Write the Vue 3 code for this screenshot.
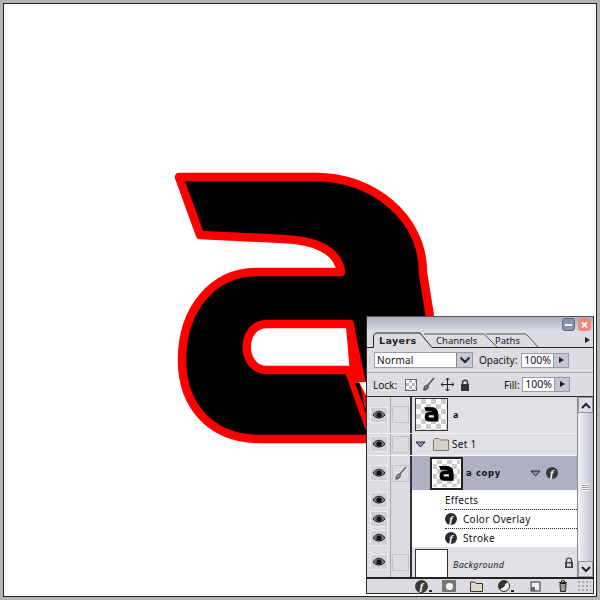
<script setup>
// glyph outline, also reused for the layer thumbnails
const outerPath =
  "M179 177 L317 177 C370 177 423 215 423 273 L431 323 L431 439 L260 439 C210 439 182 405 182 360 C182 310 212 272 257 272 L341 272 C338 250 315 240 283 239 L200 235 Z";
const counterPath = "M267 324 L350 324 L354 370 L267 370 C240 370 240 324 267 324 Z";

const effects = ["Color Overlay", "Stroke"];
</script>

<template>
  <div class="frame">
    <svg class="glyph" width="592" height="592" viewBox="4 4 592 592">
      <path :d="outerPath" fill="#000" stroke="#f00" stroke-width="8.5" stroke-linejoin="round" />
      <path :d="counterPath" fill="#fff" stroke="#f00" stroke-width="8.5" stroke-linejoin="round" />
      <path d="M351 326 L368 408" stroke="#f00" stroke-width="6" fill="none" />
      <path d="M348 372 L368 428" stroke="#f00" stroke-width="6" fill="none" />
      <path d="M350 368 L360 368 L366 383 L354 383 Z" fill="#f00" />
      <path d="M359 382 L366 382 L367 397 Z" fill="#fff" />
    </svg>

    <div class="panel">
      <div class="titlebar">
        <span class="winbtn min"><i></i></span>
        <span class="winbtn close">×</span>
      </div>

      <div class="tabs">
        <svg class="tab-lines" width="226" height="16" viewBox="367 332 226 16">
          <path d="M486 334 L526 334 L538 347" fill="none" stroke="#555" />
          <path d="M424 334 L484 334 L497 347" fill="none" stroke="#555" />
          <path d="M367 347.5 L373.5 347.5 L373.5 335 L376 333 L420 333 L432 347.5 L593 347.5" fill="none" stroke="#222" />
        </svg>
        <span class="tab active">Layers</span>
        <span class="tab ch">Channels</span>
        <span class="tab pa">Paths</span>
        <span class="menu-btn"></span>
      </div>

      <div class="controls top">
        <div class="select">
          <span>Normal</span>
          <span class="select-btn">
            <svg width="12" height="8" viewBox="0 0 12 8"><path d="M1.5 1.5 L6 6 L10.5 1.5" fill="none" stroke="#223" stroke-width="2" /></svg>
          </span>
        </div>
        <span class="lbl opacity">Opacity:</span>
        <span class="num">100%</span>
        <span class="step"></span>
      </div>

      <div class="controls lockrow">
        <span class="lbl lock-lbl">Lock:</span>
        <span class="lock-box"></span>
        <svg class="l-ic" width="14" height="15" viewBox="0 0 14 15"><path d="M12 1 L6 8 M2 13 C2 10 4 8 6 8 C7 10 5 13 2 13 Z" stroke="#555" stroke-width="1.6" fill="#888" /></svg>
        <svg class="l-ic mv" width="13" height="13" viewBox="0 0 13 13"><path d="M6.5 0 V13 M0 6.5 H13 M4.5 2 L6.5 0 L8.5 2 M4.5 11 L6.5 13 L8.5 11 M2 4.5 L0 6.5 L2 8.5 M11 4.5 L13 6.5 L11 8.5" stroke="#222" fill="none" /></svg>
        <svg class="l-ic pad" width="10" height="12" viewBox="0 0 10 12"><path d="M2.5 5 V3.5 C2.5 0.5 7.5 0.5 7.5 3.5 V5" fill="none" stroke="#333" stroke-width="1.4" /><rect x="1" y="5" width="8" height="7" fill="#333" /></svg>
        <span class="lbl fill">Fill:</span>
        <span class="num">100%</span>
        <span class="step"></span>
      </div>

      <div class="body">
        <div class="list">
          <div class="row h-a">
            <div class="eye"><svg width="14" height="10" viewBox="0 0 14 10"><path d="M1 5 C4 0 10 0 13 5 C10 9 4 9 1 5 Z" fill="#777" stroke="#222" /><circle cx="7" cy="5" r="2.6" fill="#111" /></svg></div>
            <div class="link"><span class="slot"></span></div>
            <div class="cell">
              <div class="thumb">
                <svg width="31" height="31" viewBox="-5 0 620 620"><path :d="outerPath" fill="#000" stroke="#000" stroke-width="24" /><path :d="counterPath" fill="#eee" /></svg>
              </div>
              <span class="name small">a</span>
            </div>
          </div>

          <div class="row h-set">
            <div class="eye"><svg width="14" height="10" viewBox="0 0 14 10"><path d="M1 5 C4 0 10 0 13 5 C10 9 4 9 1 5 Z" fill="#777" stroke="#222" /><circle cx="7" cy="5" r="2.6" fill="#111" /></svg></div>
            <div class="link"><span class="slot"></span></div>
            <div class="cell set">
              <svg class="tri" width="11" height="7" viewBox="0 0 11 7"><path d="M1 1 H10 L5.5 6 Z" fill="#8f8fc4" stroke="#223" /></svg>
              <svg class="folder" width="16" height="13" viewBox="0 0 16 13"><path d="M0.5 12.5 V2 L2 0.5 H6 L7.5 2 H15.5 V12.5 Z" fill="#d4d2c6" stroke="#777" /></svg>
              <span class="name">Set 1</span>
            </div>
          </div>

          <div class="row h-copy">
            <div class="eye"><svg width="14" height="10" viewBox="0 0 14 10"><path d="M1 5 C4 0 10 0 13 5 C10 9 4 9 1 5 Z" fill="#777" stroke="#222" /><circle cx="7" cy="5" r="2.6" fill="#111" /></svg></div>
            <div class="link"><span class="slot brush"><svg width="14" height="14" viewBox="0 0 14 14"><path d="M12 1 L6 8 M2 13 C2 10 4 8 6 8 C7 10 5 13 2 13 Z" stroke="#666" stroke-width="1.5" fill="#999" /></svg></span></div>
            <div class="cell selected">
              <div class="thumb picked">
                <svg width="27" height="27" viewBox="45 50 520 520"><path :d="outerPath" fill="#000" stroke="#000" stroke-width="24" /><path :d="counterPath" fill="#eee" /></svg>
              </div>
              <span class="name bold">a copy</span>
              <svg class="tri-r" width="11" height="7" viewBox="0 0 11 7"><path d="M1 1 H10 L5.5 6 Z" fill="#8f8fc4" stroke="#223" /></svg>
              <span class="fx dark">f</span>
            </div>
          </div>

          <div class="row h-fx">
            <div class="eye"><svg width="14" height="10" viewBox="0 0 14 10"><path d="M1 5 C4 0 10 0 13 5 C10 9 4 9 1 5 Z" fill="#777" stroke="#222" /><circle cx="7" cy="5" r="2.6" fill="#111" /></svg></div>
            <div class="link"></div>
            <div class="cell white"><span class="name fx-title">Effects</span></div>
          </div>
          <div v-for="item in effects" :key="item" class="row h-fx">
            <div class="eye"><svg width="14" height="10" viewBox="0 0 14 10"><path d="M1 5 C4 0 10 0 13 5 C10 9 4 9 1 5 Z" fill="#777" stroke="#222" /><circle cx="7" cy="5" r="2.6" fill="#111" /></svg></div>
            <div class="link"></div>
            <div class="cell white">
              <div class="fx-line">
                <span class="fx">f</span>
                <span class="name">{{ item }}</span>
              </div>
            </div>
          </div>

          <div class="row h-bg">
            <div class="eye"><svg width="14" height="10" viewBox="0 0 14 10"><path d="M1 5 C4 0 10 0 13 5 C10 9 4 9 1 5 Z" fill="#777" stroke="#222" /><circle cx="7" cy="5" r="2.6" fill="#111" /></svg></div>
            <div class="link"><span class="slot"></span></div>
            <div class="cell bg">
              <div class="thumb blank"></div>
              <span class="name ital">Background</span>
              <svg class="bg-lock" width="10" height="11" viewBox="0 0 10 11"><path d="M2.5 5 V3 C2.5 0.5 7.5 0.5 7.5 3 V5" fill="none" stroke="#444" stroke-width="1.4" /><rect x="1" y="5" width="8" height="6" fill="#444" /><rect x="3" y="6.5" width="4" height="3" fill="#ddd" /></svg>
            </div>
          </div>
        </div>

        <div class="scroll">
          <span class="arrow"><svg width="10" height="7" viewBox="0 0 10 7"><path d="M1 6 L5 2 L9 6" fill="none" stroke="#223" stroke-width="2" /></svg></span>
          <span class="thumb-bar"><i></i></span>
          <span class="arrow"><svg width="10" height="7" viewBox="0 0 10 7"><path d="M1 1 L5 5 L9 1" fill="none" stroke="#223" stroke-width="2" /></svg></span>
        </div>
      </div>

      <div class="footer">
        <span class="fx dark big">f</span><i class="dot"></i>
        <span class="mask"><i></i></span>
        <svg class="f-ic" width="13" height="11" viewBox="0 0 13 11"><path d="M0.5 10.5 V1 H4.5 L6 2.5 H12.5 V10.5 Z" fill="#dcd8c8" stroke="#333" /></svg>
        <span class="half"></span><i class="dot d2"></i>
        <svg class="f-new" width="11" height="11" viewBox="0 0 11 11"><rect x="1" y="1" width="9" height="9" fill="#eee" stroke="#333" /><rect x="1" y="6" width="4" height="4" fill="#666" /></svg>
        <svg class="f-bin" width="10" height="12" viewBox="0 0 10 12"><path d="M1 2.5 H9 M3.5 2 V0.7 H6.5 V2" stroke="#222" fill="none" /><path d="M2 3.5 H8 L7.5 11.5 H2.5 Z" fill="#999" stroke="#222" /></svg>
        <span class="grip"></span>
      </div>
    </div>
  </div>
</template>

<style scoped>
.frame {
  position: relative;
  width: 600px;
  height: 600px;
  box-sizing: border-box;
  background: #fff;
  border: 4px solid #b4b4b4;
  outline: 1px solid #222;
  outline-offset: -4px;
  overflow: hidden;
  font-family: "Noto Sans", "DejaVu Sans", sans-serif;
  font-size: 10px;
  color: #111;
}
.glyph {
  position: absolute;
  left: 0;
  top: 0;
}
.panel {
  position: absolute;
  left: 362px;
  top: 312px;
  width: 226px;
  height: 276px;
  display: flex;
  flex-direction: column;
  background: #dcdce2;
  border: 1px solid #2c2c2c;
  border-top-color: #555;
}
.titlebar {
  height: 15px;
  display: flex;
  justify-content: flex-end;
  align-items: center;
  gap: 3px;
  padding: 0 2px 0 0;
  background: linear-gradient(#a9adbe, #dfdfe6);
}
.winbtn {
  width: 13px;
  height: 13px;
  border-radius: 3px;
  box-sizing: border-box;
  display: flex;
  align-items: center;
  justify-content: center;
}
.min {
  background: #8c93ad;
  border: 1px solid #666c86;
}
.min i {
  width: 7px;
  height: 2px;
  background: #fff;
}
.close {
  background: #ee8a72;
  color: #fff;
  font-size: 14px;
  font-weight: bold;
  line-height: 1;
}
.tabs {
  position: relative;
  height: 16px;
  display: flex;
  align-items: center;
  font-size: 9.5px;
}
.tab-lines {
  position: absolute;
  left: 0;
  top: 0;
}
.tab {
  position: relative;
  color: #222;
}
.active {
  margin-left: 12px;
  width: 50px;
  font-family: "DejaVu Sans", sans-serif;
  font-weight: bold;
  font-size: 9.5px;
  letter-spacing: 0.4px;
}
.ch {
  margin-left: 7px;
  width: 59px;
}
.menu-btn {
  position: relative;
  margin-left: auto;
  margin-right: 3px;
  width: 0;
  height: 0;
  border-left: 5px solid #222;
  border-top: 3px solid transparent;
  border-bottom: 3px solid transparent;
}
.controls {
  display: flex;
  align-items: center;
  padding-left: 7px;
}
.top {
  height: 24px;
  border-bottom: 1px solid #a8a8b0;
}
.lockrow {
  height: 23px;
  padding-left: 6px;
  border-bottom: 1px solid #2c2c2c;
}
.select {
  width: 95px;
  height: 14px;
  display: flex;
  justify-content: space-between;
  align-items: center;
  background: #fff;
  border: 1px solid #9a9aa6;
  padding-left: 2px;
  margin-right: 6px;
  letter-spacing: 0.2px;
}
.select-btn {
  width: 15px;
  height: 14px;
  display: flex;
  align-items: center;
  justify-content: center;
  background: #c8cad6;
  border-left: 1px solid #888;
}
.opacity {
  width: 42px;
}
.num {
  width: 31px;
  height: 13px;
  line-height: 13px;
  background: #fff;
  border: 1px solid #9a9aa6;
  font-size: 10.5px;
  text-align: center;
}
.step {
  position: relative;
  width: 14px;
  height: 13px;
  background: #c4c6d2;
  border: 1px solid #9a9aa6;
  border-left: 0;
}
.step::after {
  content: "";
  position: absolute;
  left: 5px;
  top: 3px;
  border-left: 5px solid #222;
  border-top: 3.5px solid transparent;
  border-bottom: 3.5px solid transparent;
}
.lock-lbl {
  width: 32px;
}
.lock-box {
  width: 10px;
  height: 10px;
  border: 1px solid #666;
  background: repeating-conic-gradient(#bbb 0 25%, #fff 0 50%) 0 0 / 6px 6px;
}
.l-ic {
  margin-left: 5px;
}
.pad {
  margin-left: 6px;
}
.fill {
  margin-left: 34px;
  width: 18px;
}
.body {
  flex: 1;
  display: flex;
  min-height: 0;
}
.list {
  flex: 1;
  min-width: 0;
  display: flex;
  flex-direction: column;
  border-right: 1px solid #888;
}
.row {
  display: flex;
  box-sizing: border-box;
}
.h-a {
  height: 37px;
  border-bottom: 1px solid #f0f0f4;
}
.h-set {
  height: 22px;
  border-bottom: 1px solid #f4f4f8;
}
.h-copy {
  height: 35px;
}
.h-fx {
  height: 19px;
}
.h-bg {
  flex: 1;
}
.eye {
  width: 23px;
  display: flex;
  align-items: center;
  justify-content: center;
  border-right: 1px solid #a8a8b0;
  background: #dcdce2;
}
.eye svg {
  padding: 2px 1px;
  background: #d0d0d6;
  border: 1px solid #ececf0;
}
.link {
  width: 21px;
  box-sizing: border-box;
  display: flex;
  align-items: center;
  justify-content: center;
  background: #dcdce2;
  border-right: 2px solid #333;
}
.slot {
  width: 15px;
  height: 15px;
  display: flex;
  align-items: center;
  justify-content: center;
  border: 1px solid #c4c4cc;
}
.cell {
  flex: 1;
  min-width: 0;
  display: flex;
  align-items: center;
  background: #e0e0e6;
  padding-left: 3px;
}
.thumb {
  width: 31px;
  height: 31px;
  display: flex;
  align-items: center;
  justify-content: center;
  border: 1px solid #333;
  background: repeating-conic-gradient(#ccc 0 25%, #fff 0 50%) 0 0 / 10px 10px;
}
.name {
  margin-left: 5px;
  letter-spacing: 0.3px;
  white-space: nowrap;
}
.small {
  font-size: 9px;
  font-weight: bold;
}
.tri {
  margin-right: 7px;
}
.folder {
  margin-right: -2px;
}
.selected {
  background: #aeb1c2;
  padding-left: 18px;
}
.picked {
  width: 29px;
  height: 29px;
  border: 2px solid #222;
  box-shadow: 0 0 0 1px #fff inset;
}
.bold {
  font-family: "DejaVu Sans", sans-serif;
  font-weight: bold;
  font-size: 8.5px;
  letter-spacing: 0.6px;
  margin-left: 3px;
}
.tri-r {
  margin-left: 29px;
}
.fx {
  flex: none;
  width: 12px;
  height: 12px;
  border-radius: 50%;
  background: #2a2a2a;
  color: #fff;
  font-family: "Liberation Serif", serif;
  font-style: italic;
  font-weight: bold;
  font-size: 11px;
  line-height: 12px;
  text-align: center;
}
.dark {
  background: #3a3a3a;
  margin-left: 5px;
}
.white {
  background: #fff;
  padding-left: 33px;
}
.fx-title {
  margin-left: 0;
}
.fx-line {
  width: 100%;
  height: 100%;
  display: flex;
  align-items: center;
  border-top: 1px dotted #222;
}
.fx-line .name {
  margin-left: 6px;
}
.bg {
  position: relative;
  align-items: flex-start;
  padding-top: 2px;
}
.blank {
  background: #fff;
  border-bottom: 0;
  height: 27px;
}
.ital {
  margin: 9px 0 0 5px;
  font-style: italic;
  font-size: 9px;
  color: #222;
}
.bg-lock {
  position: absolute;
  right: 3px;
  top: 10px;
}
.scroll {
  width: 15px;
  display: flex;
  flex-direction: column;
  background: #d4d4dc;
}
.arrow {
  height: 16px;
  display: flex;
  align-items: center;
  justify-content: center;
  background: #dcdde6;
  border: 1px solid #999;
  box-sizing: border-box;
}
.thumb-bar {
  flex: 1;
  display: flex;
  align-items: center;
  justify-content: center;
  background: linear-gradient(90deg, #f2f2f6, #bfc1cf);
}
.thumb-bar i {
  width: 7px;
  height: 7px;
  background: repeating-linear-gradient(#fff 0 1px, #999 1px 2px);
}
.footer {
  position: relative;
  height: 14px;
  display: flex;
  align-items: center;
  border-top: 2px solid #222;
  background: #dcdce2;
  padding-left: 43px;
}
.big {
  width: 13px;
  height: 13px;
  line-height: 13px;
}
.dot {
  flex: none;
  width: 3px;
  height: 2px;
  margin: 9px 0 0 1px;
  background: #222;
}
.mask {
  flex: none;
  width: 14px;
  height: 12px;
  margin-left: 10px;
  display: flex;
  align-items: center;
  justify-content: center;
  background: #777;
}
.mask i {
  width: 7px;
  height: 7px;
  border-radius: 50%;
  background: #fff;
}
.f-ic {
  flex: none;
  margin-left: 14px;
}
.half {
  flex: none;
  width: 12px;
  height: 12px;
  border-radius: 50%;
  margin-left: 15px;
  background: linear-gradient(135deg, #333 50%, #eee 50%);
  border: 1px solid #333;
  box-sizing: border-box;
}
.f-new {
  flex: none;
  margin-left: 16px;
}
.f-bin {
  flex: none;
  margin-left: 17px;
}
.grip {
  flex: none;
  width: 14px;
  height: 13px;
  margin-left: 9px;
  background: radial-gradient(#aaa 35%, transparent 40%) 0 0 / 4px 4px;
}
</style>

<style>
html,
body {
  margin: 0;
  background: #fff;
}
</style>
